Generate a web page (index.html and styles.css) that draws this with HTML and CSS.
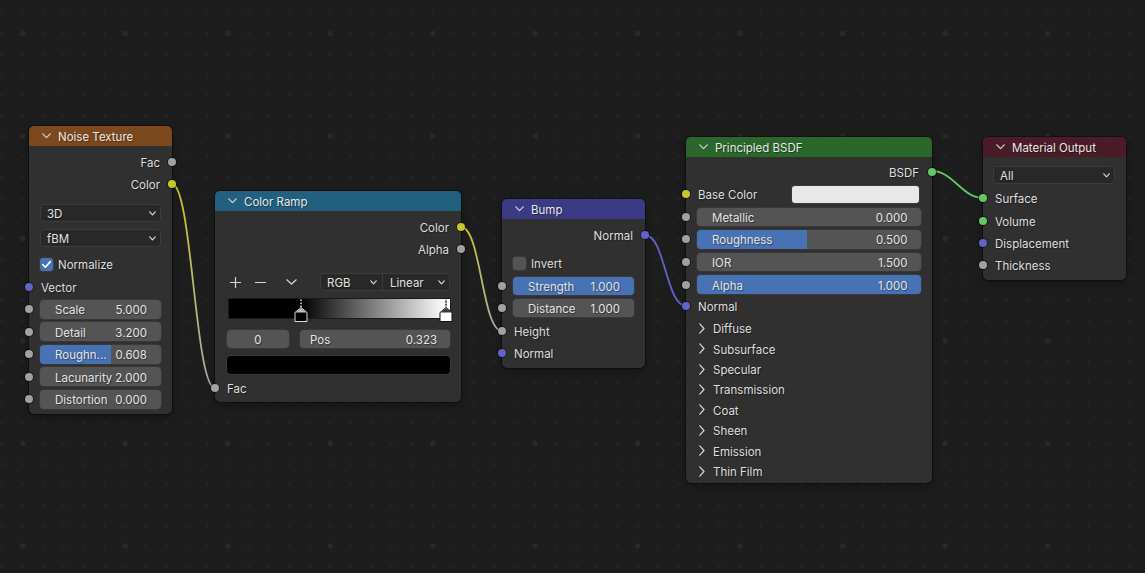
FILE: index.html
```html
<!DOCTYPE html>
<html>
<head>
<meta charset="utf-8">
<title>Shader Editor</title>
<link rel="stylesheet" href="styles.css">
</head>
<body>
<div class="canvas">
  <svg class="links" width="1145" height="573" viewBox="0 0 1145 573">
    <defs>
      <linearGradient id="lk1" gradientUnits="userSpaceOnUse" x1="172" y1="184" x2="215" y2="388">
        <stop offset="0" stop-color="#c7c729"/><stop offset="1" stop-color="#a8a8a8"/>
      </linearGradient>
      <linearGradient id="lk2" gradientUnits="userSpaceOnUse" x1="461" y1="227" x2="502" y2="331">
        <stop offset="0" stop-color="#c7c729"/><stop offset="1" stop-color="#a8a8a8"/>
      </linearGradient>
    </defs>
    <path class="link" d="M172 184 C192 184 195 388 215 388" stroke="url(#lk1)"/>
    <path class="link" d="M461 227 C481 227 482 331 502 331" stroke="url(#lk2)"/>
    <path class="link" d="M645 235 C665 235 666 306 686 306" stroke="#6363c7"/>
    <path class="link" d="M932 171 C953 171 962 198 983 198" stroke="#63c763"/>
  </svg>

  <!-- Noise Texture -->
  <div class="node n-noise">
    <div class="hdr h-tex">
      <svg class="chev" width="9" height="6" viewBox="0 0 9 6"><path d="M0.8 0.8 L4.5 4.6 L8.2 0.8"/></svg>
      <span>Noise Texture</span>
    </div>
    <div class="body b-noise">
      <div class="row out"><span>Fac</span><i class="sock r gray"></i></div>
      <div class="row out"><span>Color</span><i class="sock r yellow"></i></div>
      <div class="sel noise-sel1"><span>3D</span><svg class="dd" width="7" height="5" viewBox="0 0 7 5"><path d="M0.8 0.8 L3.5 3.8 L6.2 0.8"/></svg></div>
      <div class="sel noise-sel2"><span>fBM</span><svg class="dd" width="7" height="5" viewBox="0 0 7 5"><path d="M0.8 0.8 L3.5 3.8 L6.2 0.8"/></svg></div>
      <div class="row noise-norm"><span class="cb on"><svg width="13" height="13" viewBox="0 0 13 13"><path d="M2.8 6.6 L5.4 9.2 L10.3 3.6"/></svg></span><span>Normalize</span></div>
      <div class="row noise-vec"><i class="sock l purple"></i><span>Vector</span></div>
      <div class="frow noise-f first"><i class="sock l gray"></i><div class="num"><span>Scale</span><span>5.000</span></div></div>
      <div class="frow noise-f"><i class="sock l gray"></i><div class="num"><span>Detail</span><span>3.200</span></div></div>
      <div class="frow noise-f"><i class="sock l gray"></i><div class="num"><b class="fill" style="width:59%"></b><span>Roughn...</span><span>0.608</span></div></div>
      <div class="frow noise-f"><i class="sock l gray"></i><div class="num"><span>Lacunarity</span><span>2.000</span></div></div>
      <div class="frow noise-f"><i class="sock l gray"></i><div class="num"><span>Distortion</span><span>0.000</span></div></div>
    </div>
  </div>

  <!-- Color Ramp -->
  <div class="node n-ramp">
    <div class="hdr h-conv">
      <svg class="chev" width="9" height="6" viewBox="0 0 9 6"><path d="M0.8 0.8 L4.5 4.6 L8.2 0.8"/></svg>
      <span>Color Ramp</span>
    </div>
    <div class="body b-ramp">
      <div class="row out"><span>Color</span><i class="sock r yellow"></i></div>
      <div class="row out"><span>Alpha</span><i class="sock r gray"></i></div>
      <div class="tools">
        <span class="tbtn"><svg width="11" height="11" viewBox="0 0 11 11"><path d="M5.5 0.5 V10.5 M0.5 5.5 H10.5"/></svg></span>
        <span class="tbtn"><svg width="11" height="11" viewBox="0 0 11 11"><path d="M0.5 5.5 H10.5"/></svg></span>
        <span class="tbtn"><svg width="11" height="6" viewBox="0 0 11 6"><path d="M0.8 0.8 L5.5 5 L10.2 0.8"/></svg></span>
        <div class="selgrp">
          <div class="selpart p-rgb"><span>RGB</span><svg class="dd" width="7" height="5" viewBox="0 0 7 5"><path d="M0.8 0.8 L3.5 3.8 L6.2 0.8"/></svg></div>
          <div class="selpart p-lin"><span>Linear</span><svg class="dd" width="7" height="5" viewBox="0 0 7 5"><path d="M0.8 0.8 L3.5 3.8 L6.2 0.8"/></svg></div>
        </div>
      </div>
      <div class="ramp">
        <svg class="marks" width="230" height="26" viewBox="0 0 230 26">
          <line x1="72" y1="0.5" x2="72" y2="8" stroke="#111" stroke-width="1.4"/>
          <line x1="72" y1="0.5" x2="72" y2="8" stroke="#eee" stroke-width="1.4" stroke-dasharray="1.5 1.5"/>
          <path d="M66 22.5 V13.5 L72 8.5 L78 13.5 V22.5 Z" fill="#000" stroke="#d8d8d8" stroke-width="1"/>
          <path d="M66.6 13.5 L72 9 L77.4 13.5 Z" fill="#bdbdbd"/>
          <line x1="217" y1="0.5" x2="217" y2="8" stroke="#111" stroke-width="1.4"/>
          <line x1="217" y1="0.5" x2="217" y2="8" stroke="#eee" stroke-width="1.4" stroke-dasharray="1.5 1.5"/>
          <path d="M211 22.5 V13.5 L217 8.5 L223 13.5 V22.5 Z" fill="#fff" stroke="#111" stroke-width="1"/>
          <path d="M211.6 13.5 L217 9 L222.4 13.5 Z" fill="#3a3a3a"/>
        </svg>
      </div>
      <div class="posrow">
        <div class="num idx"><span>0</span></div>
        <div class="num pos"><span>Pos</span><span>0.323</span></div>
      </div>
      <div class="swatch black"></div>
      <div class="row ramp-fac"><i class="sock l gray"></i><span>Fac</span></div>
    </div>
  </div>

  <!-- Bump -->
  <div class="node n-bump">
    <div class="hdr h-vec">
      <svg class="chev" width="9" height="6" viewBox="0 0 9 6"><path d="M0.8 0.8 L4.5 4.6 L8.2 0.8"/></svg>
      <span>Bump</span>
    </div>
    <div class="body b-bump">
      <div class="row out"><span>Normal</span><i class="sock r purple"></i></div>
      <div class="row bump-inv"><span class="cb"></span><span>Invert</span></div>
      <div class="frow bump-f1"><i class="sock l gray"></i><div class="num"><b class="fill" style="width:100%"></b><span>Strength</span><span>1.000</span></div></div>
      <div class="frow bump-f2"><i class="sock l gray"></i><div class="num"><span>Distance</span><span>1.000</span></div></div>
      <div class="row bump-h"><i class="sock l gray"></i><span>Height</span></div>
      <div class="row"><i class="sock l purple"></i><span>Normal</span></div>
    </div>
  </div>

  <!-- Principled BSDF -->
  <div class="node n-bsdf">
    <div class="hdr h-shader">
      <svg class="chev" width="9" height="6" viewBox="0 0 9 6"><path d="M0.8 0.8 L4.5 4.6 L8.2 0.8"/></svg>
      <span>Principled BSDF</span>
    </div>
    <div class="body b-bsdf">
      <div class="row out"><span>BSDF</span><i class="sock r green"></i></div>
      <div class="row bsdf-base"><i class="sock l yellow"></i><span>Base Color</span><span class="swatch light"></span></div>
      <div class="frow bsdf-f first"><i class="sock l gray"></i><div class="num"><span>Metallic</span><span>0.000</span></div></div>
      <div class="frow bsdf-f"><i class="sock l gray"></i><div class="num"><b class="fill" style="width:49%"></b><span>Roughness</span><span>0.500</span></div></div>
      <div class="frow bsdf-f"><i class="sock l gray"></i><div class="num"><span>IOR</span><span>1.500</span></div></div>
      <div class="frow bsdf-f"><i class="sock l gray"></i><div class="num"><b class="fill" style="width:100%"></b><span>Alpha</span><span>1.000</span></div></div>
      <div class="row bsdf-normal"><i class="sock l purple"></i><span>Normal</span></div>
      <div class="panels">
        <div class="panel"><svg class="pchev" width="6" height="11" viewBox="0 0 6 11"><path d="M0.8 0.8 L5 5.5 L0.8 10.2"/></svg><span>Diffuse</span></div>
        <div class="panel"><svg class="pchev" width="6" height="11" viewBox="0 0 6 11"><path d="M0.8 0.8 L5 5.5 L0.8 10.2"/></svg><span>Subsurface</span></div>
        <div class="panel"><svg class="pchev" width="6" height="11" viewBox="0 0 6 11"><path d="M0.8 0.8 L5 5.5 L0.8 10.2"/></svg><span>Specular</span></div>
        <div class="panel"><svg class="pchev" width="6" height="11" viewBox="0 0 6 11"><path d="M0.8 0.8 L5 5.5 L0.8 10.2"/></svg><span>Transmission</span></div>
        <div class="panel"><svg class="pchev" width="6" height="11" viewBox="0 0 6 11"><path d="M0.8 0.8 L5 5.5 L0.8 10.2"/></svg><span>Coat</span></div>
        <div class="panel"><svg class="pchev" width="6" height="11" viewBox="0 0 6 11"><path d="M0.8 0.8 L5 5.5 L0.8 10.2"/></svg><span>Sheen</span></div>
        <div class="panel"><svg class="pchev" width="6" height="11" viewBox="0 0 6 11"><path d="M0.8 0.8 L5 5.5 L0.8 10.2"/></svg><span>Emission</span></div>
        <div class="panel"><svg class="pchev" width="6" height="11" viewBox="0 0 6 11"><path d="M0.8 0.8 L5 5.5 L0.8 10.2"/></svg><span>Thin Film</span></div>
      </div>
    </div>
  </div>

  <!-- Material Output -->
  <div class="node n-out">
    <div class="hdr h-out">
      <svg class="chev" width="9" height="6" viewBox="0 0 9 6"><path d="M0.8 0.8 L4.5 4.6 L8.2 0.8"/></svg>
      <span>Material Output</span>
    </div>
    <div class="body b-out">
      <div class="sel out-sel"><span>All</span><svg class="dd" width="7" height="5" viewBox="0 0 7 5"><path d="M0.8 0.8 L3.5 3.8 L6.2 0.8"/></svg></div>
      <div class="row orow first"><i class="sock l green"></i><span>Surface</span></div>
      <div class="row orow"><i class="sock l green"></i><span>Volume</span></div>
      <div class="row orow"><i class="sock l purple"></i><span>Displacement</span></div>
      <div class="row orow"><i class="sock l gray"></i><span>Thickness</span></div>
    </div>
  </div>
</div>
</body>
</html>
```

FILE: styles.css
```css
* { box-sizing: border-box; margin: 0; padding: 0; }

html, body { width: 1145px; height: 573px; overflow: hidden; }

body {
  background-color: #1d1d1d;
  background-image:
    radial-gradient(circle, #2a2a2a 0, #2a2a2a 2.2px, rgba(29,29,29,0) 3px),
    radial-gradient(circle, #252525 0, #252525 1px, rgba(29,29,29,0) 1.7px);
  background-size: 102.5px 102.5px, 20.5px 20.5px;
  background-position: -28.55px -17.75px, -8.05px 3.05px;
  font-family: Inter, "DejaVu Sans", sans-serif;
  font-size: 11.5px;
  color: #dedede;
}

.canvas { position: relative; width: 1145px; height: 573px; }

.links { position: absolute; left: 0; top: 0; }
.link { fill: none; stroke-width: 1.8; stroke-linecap: round; }

/* nodes */
.node {
  position: absolute;
  background: #303030;
  border-radius: 5px;
  box-shadow: 0 0 0 1px rgba(10,10,10,0.55), 0 3px 8px rgba(0,0,0,0.35);
}
.n-noise { left: 29px; top: 126px; width: 143px; }
.n-ramp  { left: 215px; top: 191px; width: 246px; }
.n-bump  { left: 502px; top: 199px; width: 143px; }
.n-bsdf  { left: 686px; top: 137px; width: 246px; }
.n-out   { left: 983px; top: 137px; width: 143px; }

.hdr {
  height: 20px;
  border-radius: 5px 5px 0 0;
  display: flex;
  align-items: center;
  padding-left: 12.5px;
  gap: 7.5px;
  color: #e8e8e8;
}
.h-tex    { background: #7c481d; }
.h-conv   { background: #22607f; }
.h-vec    { background: #3b3b85; }
.h-shader { background: #2b672b; }
.h-out    { background: #4a1c27; }

.chev { display: block; margin-top: -1px; }
.chev path, .dd path, .pchev path, .tbtn path {
  fill: none; stroke: #d6d6d6; stroke-width: 1.2; stroke-linecap: round; stroke-linejoin: round;
}

.body { display: flex; flex-direction: column; }

span {
  position: relative;
  top: 1px;
  text-shadow: 1px 1px 1px rgba(0,0,0,0.4);
  white-space: nowrap;
}

.row {
  position: relative;
  height: 22px;
  display: flex;
  align-items: center;
  padding: 0 12px;
}
.row.out { justify-content: flex-end; }

.sock {
  position: absolute;
  top: 50%;
  width: 8px;
  height: 8px;
  margin-top: -4px;
  border-radius: 50%;
  box-shadow: 0 0 0 1px rgba(0,0,0,0.45);
}
.sock.l { left: -4px; }
.sock.r { right: -4px; }
.gray   { background: #a1a1a1; }
.yellow { background: #c7c729; }
.purple { background: #6363c7; }
.green  { background: #63c763; }

/* dropdowns */
.sel {
  height: 18px;
  margin: 0 11px;
  background: #282828;
  border-radius: 4px;
  box-shadow: inset 0 0 0 1px #3c3c3c;
  display: flex;
  align-items: center;
  justify-content: space-between;
  padding: 0 5px 0 7px;
  color: #e2e2e2;
}
.dd { display: block; }

/* number fields */
.frow { position: relative; height: 18.6px; padding: 0 11px; }
.num {
  position: relative;
  height: 100%;
  background: #545454;
  border-radius: 4px;
  box-shadow: 0 0 0 1px #383838;
  display: flex;
  align-items: center;
  justify-content: space-between;
  padding: 0 14px 0 15px;
  overflow: hidden;
  color: #e4e4e4;
}
.fill { position: absolute; left: 0; top: 0; bottom: 0; background: #4772b3; }

/* checkboxes */
.cb {
  top: 0;
  width: 13px; height: 13px;
  border-radius: 3px;
  background: #545454;
  box-shadow: 0 0 0 1px #3a3a3a;
  margin-left: -1px;
  margin-right: 5px;
  display: flex;
}
.cb.on { background: #4772b3; }
.cb svg path { fill: none; stroke: #fff; stroke-width: 1.6; stroke-linecap: round; stroke-linejoin: round; }

/* Noise spacing */
.b-noise { padding: 5px 0 5.3px; }
.noise-sel1 { margin-top: 9px; }
.noise-sel2 { margin-top: 7px; }
.noise-norm { margin-top: 6px; }
.noise-vec { margin-top: 1px; }
.noise-f { margin-top: 3.9px; }
.noise-f.first { margin-top: 2px; }

/* Color ramp */
.b-ramp { padding: 5px 0 3.6px; }
.tools {
  margin-top: 13.3px;
  height: 18px;
  display: flex;
  align-items: center;
  padding: 0 11px 0 15px;
}
.tbtn { top: 0; width: 11px; height: 18px; display: flex; align-items: center; justify-content: center; text-shadow: none; }
.tbtn + .tbtn { margin-left: 14px; }
.tbtn:nth-child(3) { margin-left: 20px; }
.tbtn svg { display: block; }
.selgrp {
  margin-left: auto;
  width: 130px;
  height: 18px;
  display: flex;
  background: #282828;
  border-radius: 4px;
  box-shadow: inset 0 0 0 1px #3c3c3c;
  color: #e2e2e2;
}
.selpart { display: flex; align-items: center; justify-content: space-between; height: 100%; }
.p-rgb { width: 63px; padding: 0 5px 0 7px; border-right: 1px solid #3c3c3c; }
.p-lin { flex: 1; padding: 0 5px 0 7px; }

.ramp {
  position: relative;
  margin: 8px 11px 0 14px;
  height: 18.4px;
  background: linear-gradient(to right, #000 0, #000 71.7px, #fff 216.8px, #fff 100%);
  box-shadow: 0 0 0 1px #1a1a1a;
}
.marks { position: absolute; left: 0; top: 0; overflow: visible; }

.posrow {
  margin: 12.3px 11px 0 12px;
  height: 18.3px;
  display: flex;
  justify-content: space-between;
}
.posrow .num { height: 100%; }
.idx { width: 62px; justify-content: center; padding: 0; }
.pos { width: 150px; padding: 0 13px 0 10px; }

.swatch.black {
  margin: 7.4px 11px 0 12px;
  height: 18.3px;
  background: #000;
  border-radius: 4px;
  box-shadow: 0 0 0 1px #3a3a3a;
}
.ramp-fac { margin-top: 2.7px; }

/* Bump */
.b-bump { padding: 5px 0 4px; }
.bump-inv { margin-top: 6px; }
.bump-f1 { margin-top: 3.3px; height: 18px; }
.bump-f2 { margin-top: 4px; height: 18px; }
.bump-h { margin-top: 2.7px; }

/* BSDF */
.b-bsdf { padding: 3.6px 0 1.9px; }
.b-bsdf .row.out { padding-right: 13px; }
.bsdf-base { margin-top: 0.7px; }
.swatch.light {
  top: 0;
  margin-left: auto;
  margin-right: 1px;
  width: 127px;
  height: 16.6px;
  background: #e8e8e8;
  border-radius: 3px;
  box-shadow: 0 0 0 1px #3a3a3a;
}
.bsdf-f { margin-top: 4.2px; height: 18.4px; }
.bsdf-f.first { margin-top: 2.3px; }
.bsdf-f .num { padding-right: 13.5px; }
.bsdf-normal { margin-top: 1.5px; }
.panels { margin-top: 0.8px; display: flex; flex-direction: column; }
.panel {
  height: 20.43px;
  display: flex;
  align-items: center;
  padding-left: 13px;
  gap: 8px;
}
.pchev { display: block; }

/* Material output */
.b-out { padding: 0 0 3.4px; }
.out-sel { margin: 9px 11px 0 10px; }
.orow { height: 22.4px; }
.orow.first { margin-top: 3px; }
```
